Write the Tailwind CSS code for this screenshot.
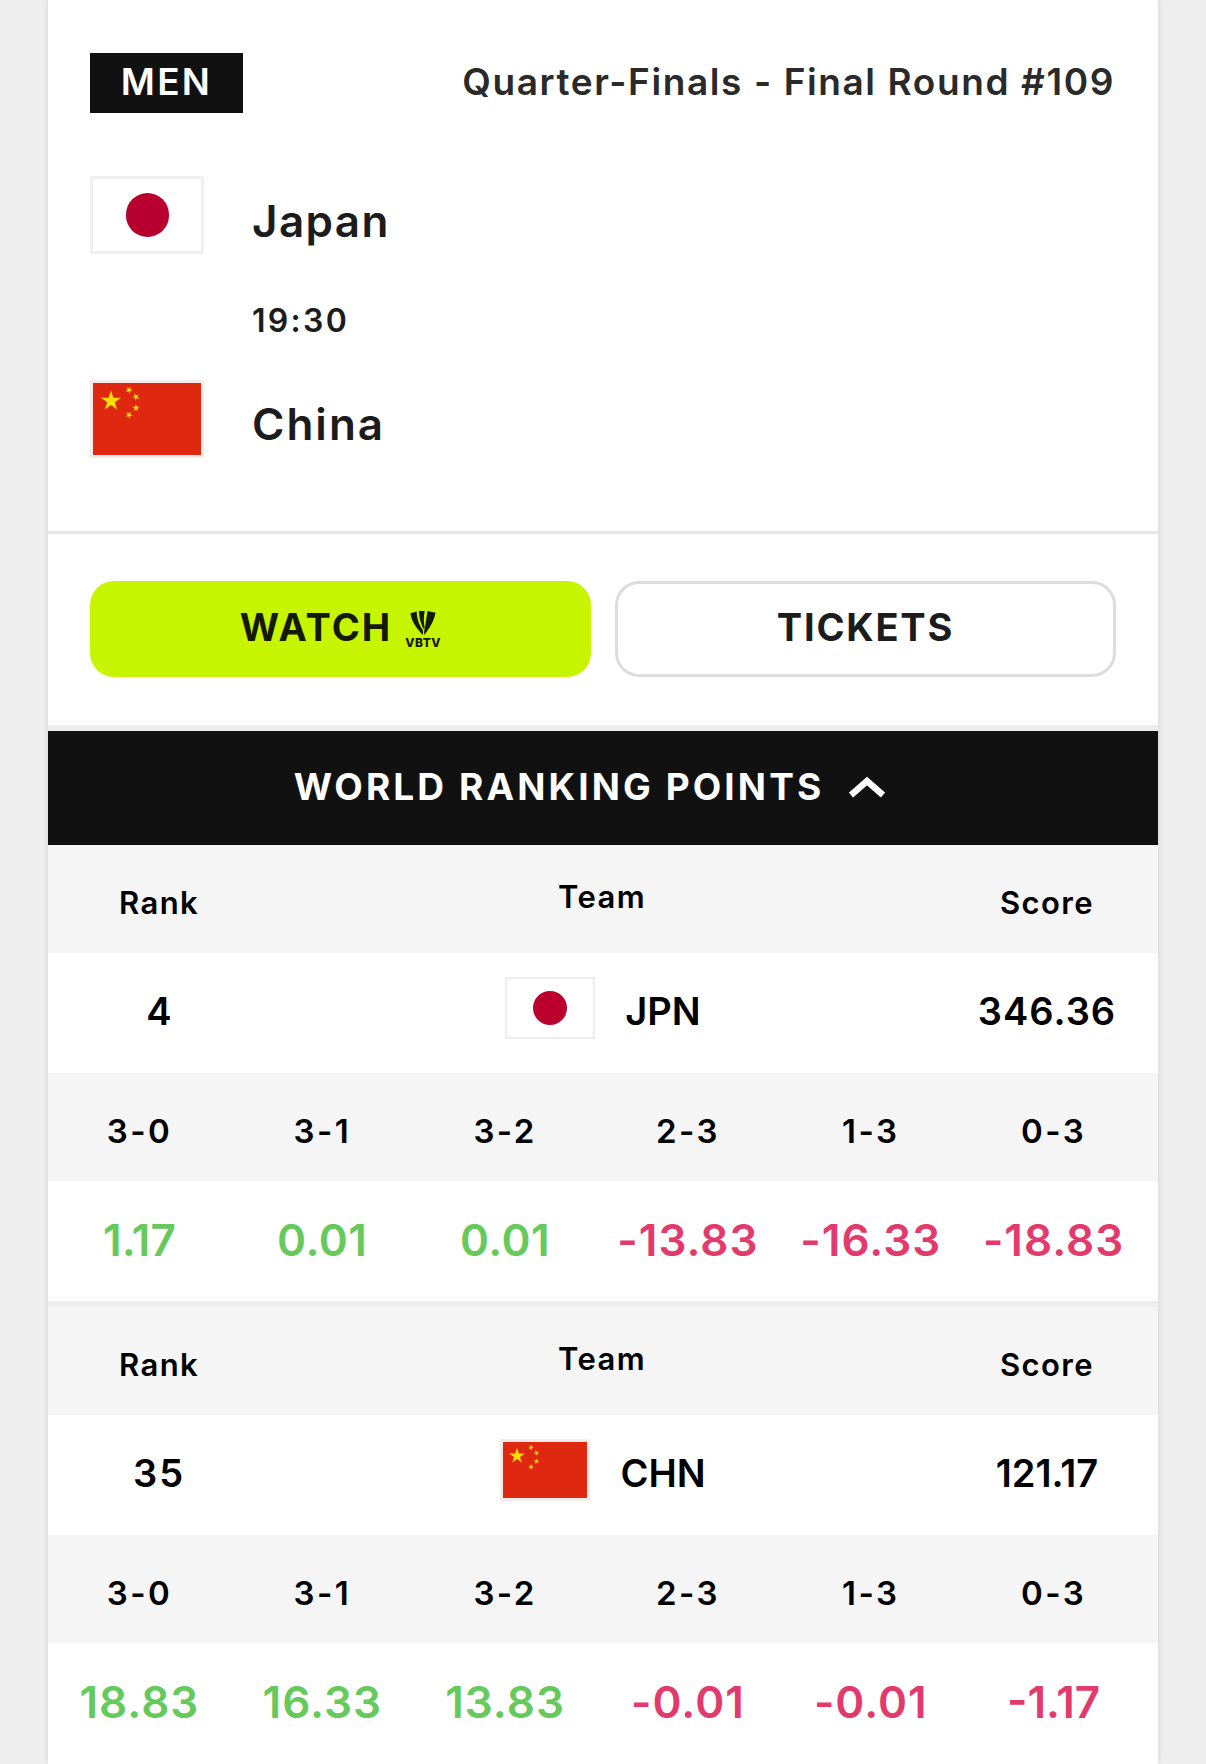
<!DOCTYPE html>
<html lang="en">
<head>
  <meta charset="UTF-8" />
  <title>Quarter-Finals - Japan v China</title>
  <script src="https://cdn.jsdelivr.net/npm/@tailwindcss/browser@4"></script>
</head>
<body class="bg-[#eeeeee] font-['Inter',sans-serif]">
  <svg class="absolute w-0 h-0">
    <defs>
      <polygon id="star" points="0,-1 .2245,-.309 .951,-.309 .363,.118 .588,.809 0,.382 -.588,.809 -.363,.118 -.951,-.309 -.2245,-.309" />
      <symbol id="cn-flag" viewBox="0 0 108 72" preserveAspectRatio="none">
        <rect width="108" height="72" fill="#de2910" />
        <use href="#star" fill="#ffde00" transform="translate(18 18) scale(10.5)" />
        <use href="#star" fill="#ffde00" transform="translate(36 7) rotate(23) scale(3.8)" />
        <use href="#star" fill="#ffde00" transform="translate(43 14) rotate(45) scale(3.8)" />
        <use href="#star" fill="#ffde00" transform="translate(43 25) rotate(0) scale(3.8)" />
        <use href="#star" fill="#ffde00" transform="translate(36 32) rotate(23) scale(3.8)" />
      </symbol>
    </defs>
  </svg>

  <div class="w-[1110px] h-[1764px] ml-[48px] overflow-hidden shadow-[0_0_6px_rgba(0,0,0,0.12)]">
    <!-- match card -->
    <div class="bg-white h-[725px]">
      <div class="h-[531px] px-[42px] pt-[53px]">
        <div class="flex items-center justify-between h-[60px] pr-[1px]">
          <span class="w-[153px] h-[60px] pb-[2px] bg-[#111111] text-white text-[37px] font-semibold tracking-[2.3px] flex items-center justify-center">MEN</span>
          <span class="pb-[2px] text-[37px] font-semibold text-[#2a2a2a] tracking-[1.6px]">Quarter-Finals - Final Round #109</span>
        </div>

        <div class="flex mt-[63px] h-[78px]">
          <div class="w-[114px] h-[78px] border-[3px] border-[#f0f0f0] flex items-center justify-center">
            <span class="w-[43px] h-[44px] rounded-full bg-[#b7002e]"></span>
          </div>
          <span class="ml-[48px] pt-[11px] text-[44px] leading-[68px] font-semibold text-[#1c1c1c] tracking-[1.4px]">Japan</span>
        </div>

        <p class="ml-[162px] mt-[47px] h-[40px] text-[32px] leading-[40px] font-semibold text-[#1c1c1c] tracking-[2.3px]">19:30</p>

        <div class="flex mt-[39px] h-[78px]">
          <div class="w-[114px] h-[78px] border-[3px] border-[#f5ebe9]">
            <svg class="w-full h-full"><use href="#cn-flag" /></svg>
          </div>
          <span class="ml-[48px] pt-[10px] text-[44px] leading-[68px] font-semibold text-[#1c1c1c] tracking-[2px]">China</span>
        </div>
      </div>

      <div class="h-[3px] bg-[#e8e8e8]"></div>

      <div class="flex gap-[24px] px-[42px] pt-[47px]">
        <a class="w-[501px] h-[96px] pb-[4px] rounded-[24px] bg-[#c7f500] flex items-center justify-center gap-[13px] text-[#141a00]">
          <span class="text-[38px] font-bold tracking-[2px]">WATCH</span>
          <span class="flex flex-col items-center w-[36px] mt-[4px]">
            <svg class="w-[26px] h-[24px]" viewBox="0 0 22 21" fill="#141a00">
              <path d="M0 2 5.5.5C5.500 7 8 13 11 17v4C5 15 1 9 0 2z" />
              <path d="M7.5 0h5c-1 5-1 10 0 15l-.9 1C9 11 7.5 6 7.5 0z" />
              <path d="M15 0l7 1.500C20.500 9 16.500 15.500 12 21v-3c1-5 2-12 3-18z" />
            </svg>
            <span class="text-[12px] leading-[11px] mt-[2px] font-extrabold tracking-[0.5px]">VBTV</span>
          </span>
        </a>
        <a class="w-[501px] h-[96px] pb-[4px] rounded-[24px] border-[3px] border-[#dddddd] bg-white flex items-center justify-center text-[38px] font-bold tracking-[1.800px] text-[#1c1c1c]">TICKETS</a>
      </div>
    </div>

    <!-- ranking bar -->
    <div class="mt-[6px] h-[114px] pb-[2px] pr-[27px] bg-[#111111] flex items-center justify-center gap-[25px] text-white">
      <span class="text-[37px] font-bold tracking-[3.100px]">WORLD RANKING POINTS</span>
      <svg class="w-[36px] h-[22px]" viewBox="0 0 36 22" fill="none" stroke="#ffffff" stroke-width="6.500"><path d="M2 19 18 5l16 14" /></svg>
    </div>

    <!-- japan points -->
    <div class="grid grid-cols-[1fr_3fr_1fr] items-center h-[108px] pt-[9px] bg-[#f5f5f5] text-[31px] font-semibold text-black text-center tracking-[1.4px]">
      <span>Rank</span>
      <span class="-mt-[12px] mr-[2px]">Team</span>
      <span>Score</span>
    </div>
    <div class="grid grid-cols-[1fr_3fr_1fr] items-center h-[120px] pb-[4px] bg-white text-[38px] font-semibold text-black text-center">
      <span>4</span>
      <div class="flex items-center justify-center gap-[30px]">
        <div class="w-[90px] h-[62px] mb-[6px] border-[2px] border-[#eeeeee] flex items-center justify-center">
          <span class="w-[34px] h-[34px] rounded-full bg-[#bc002d]"></span>
        </div>
        <span>JPN</span>
      </div>
      <span class="tracking-[1px]">346.36</span>
    </div>
    <div class="grid grid-cols-6 items-center h-[108px] pt-[9px] pr-[13px] bg-[#f5f5f5] text-[33px] font-semibold text-black text-center tracking-[2.4px]">
      <span>3-0</span><span>3-1</span><span>3-2</span><span>2-3</span><span>1-3</span><span>0-3</span>
    </div>
    <div class="grid grid-cols-6 items-center h-[120px] pb-[2px] pr-[13px] bg-white text-[44px] font-semibold text-center tracking-[1px]">
      <span class="text-[#66c95c] tracking-normal">1.17</span><span class="text-[#66c95c] tracking-[0.5px]">0.01</span><span class="text-[#66c95c] tracking-[0.5px]">0.01</span>
      <span class="text-[#e33a6d]">-13.83</span><span class="text-[#e33a6d]">-16.33</span><span class="text-[#e33a6d]">-18.83</span>
    </div>

    <!-- china points -->
    <div class="mt-[6px] grid grid-cols-[1fr_3fr_1fr] items-center h-[108px] pt-[9px] bg-[#f5f5f5] text-[31px] font-semibold text-black text-center tracking-[1.4px]">
      <span>Rank</span>
      <span class="-mt-[12px] mr-[2px]">Team</span>
      <span>Score</span>
    </div>
    <div class="grid grid-cols-[1fr_3fr_1fr] items-center h-[120px] pb-[4px] bg-white text-[38px] font-semibold text-black text-center">
      <span class="tracking-[2px]">35</span>
      <div class="flex items-center justify-center gap-[30px]">
        <div class="w-[90px] h-[62px] mb-[6px] border-[3px] border-[#f5ebe9]">
          <svg class="w-full h-full"><use href="#cn-flag" /></svg>
        </div>
        <span>CHN</span>
      </div>
      <span>121.17</span>
    </div>
    <div class="grid grid-cols-6 items-center h-[108px] pt-[9px] pr-[13px] bg-[#f5f5f5] text-[33px] font-semibold text-black text-center tracking-[2.4px]">
      <span>3-0</span><span>3-1</span><span>3-2</span><span>2-3</span><span>1-3</span><span>0-3</span>
    </div>
    <div class="grid grid-cols-6 items-center h-[121px] pb-[4px] pr-[13px] bg-white text-[44px] font-semibold text-center tracking-[1px]">
      <span class="text-[#66c95c]">18.83</span><span class="text-[#66c95c]">16.33</span><span class="text-[#66c95c]">13.83</span>
      <span class="text-[#e33a6d]">-0.01</span><span class="text-[#e33a6d]">-0.01</span><span class="text-[#e33a6d] tracking-normal">-1.17</span>
    </div>
  </div>
</body>
</html>
